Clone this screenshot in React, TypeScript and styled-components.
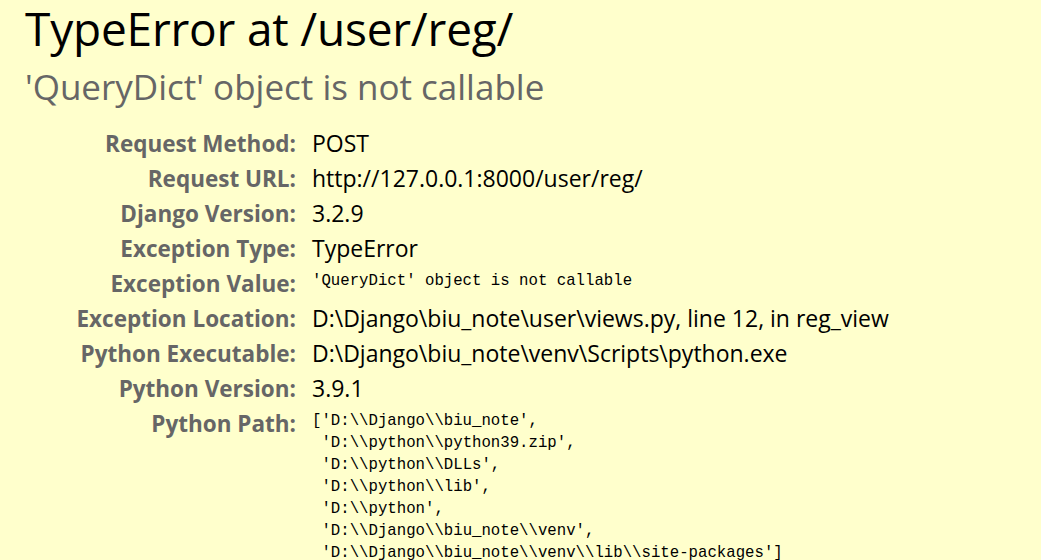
import React from "react";
import styled, { createGlobalStyle } from "styled-components";

const Global = createGlobalStyle`
  html, body { margin: 0; padding: 0; background: #ffffcc; }
  body { font-family: "Open Sans", "Noto Sans", sans-serif; color: #000; }
`;

const Summary = styled.div`
  background: #ffffcc;
  padding: 0 24px 0 25px;
  min-height: 560px;
  box-sizing: border-box;
`;

const Title = styled.h1`
  margin: 0;
  font-weight: 400;
  font-size: 46px;
  line-height: 56px;
  letter-spacing: -0.2px;
`;

const Subtitle = styled.h2`
  margin: 9px 0 0;
  font-weight: 400;
  font-size: 35px;
  line-height: 44px;
  color: #666;
`;

const Meta = styled.div`
  display: grid;
  grid-template-columns: 271px 1fr;
  column-gap: 16px;
  margin-top: 17px;
`;

const Label = styled.div`
  text-align: right;
  font-weight: 700;
  font-size: 22.5px;
  line-height: 35px;
  color: #666;
`;

const Value = styled.div`
  font-size: 23px;
  line-height: 35px;
`;

const Mono = styled.pre`
  margin: 0;
  padding-top: 4px;
  font-family: "Liberation Mono", "DejaVu Sans Mono", monospace;
  font-size: 15.7px;
  line-height: 22px;
  white-space: pre-wrap;
`;

const rows: [string, string][] = [
  ["Request Method:", "POST"],
  ["Request URL:", "http://127.0.0.1:8000/user/reg/"],
  ["Django Version:", "3.2.9"],
  ["Exception Type:", "TypeError"],
];

const rows2: [string, string][] = [
  ["Exception Location:", "D:\\Django\\biu_note\\user\\views.py, line 12, in reg_view"],
  ["Python Executable:", "D:\\Django\\biu_note\\venv\\Scripts\\python.exe"],
  ["Python Version:", "3.9.1"],
];

const pythonPath = `['D:\\\\Django\\\\biu_note',
 'D:\\\\python\\\\python39.zip',
 'D:\\\\python\\\\DLLs',
 'D:\\\\python\\\\lib',
 'D:\\\\python',
 'D:\\\\Django\\\\biu_note\\\\venv',
 'D:\\\\Django\\\\biu_note\\\\venv\\\\lib\\\\site-packages']`;

export default function App() {
  return (
    <>
      <Global />
      <Summary>
        <Title>TypeError at /user/reg/</Title>
        <Subtitle>'QueryDict' object is not callable</Subtitle>
        <Meta>
          {rows.map(([k, v]) => (
            <React.Fragment key={k}>
              <Label>{k}</Label>
              <Value>{v}</Value>
            </React.Fragment>
          ))}
          <Label>Exception Value:</Label>
          <Mono>'QueryDict' object is not callable</Mono>
          {rows2.map(([k, v]) => (
            <React.Fragment key={k}>
              <Label>{k}</Label>
              <Value>{v}</Value>
            </React.Fragment>
          ))}
          <Label>Python Path:</Label>
          <Mono>{pythonPath}</Mono>
        </Meta>
      </Summary>
    </>
  );
}
